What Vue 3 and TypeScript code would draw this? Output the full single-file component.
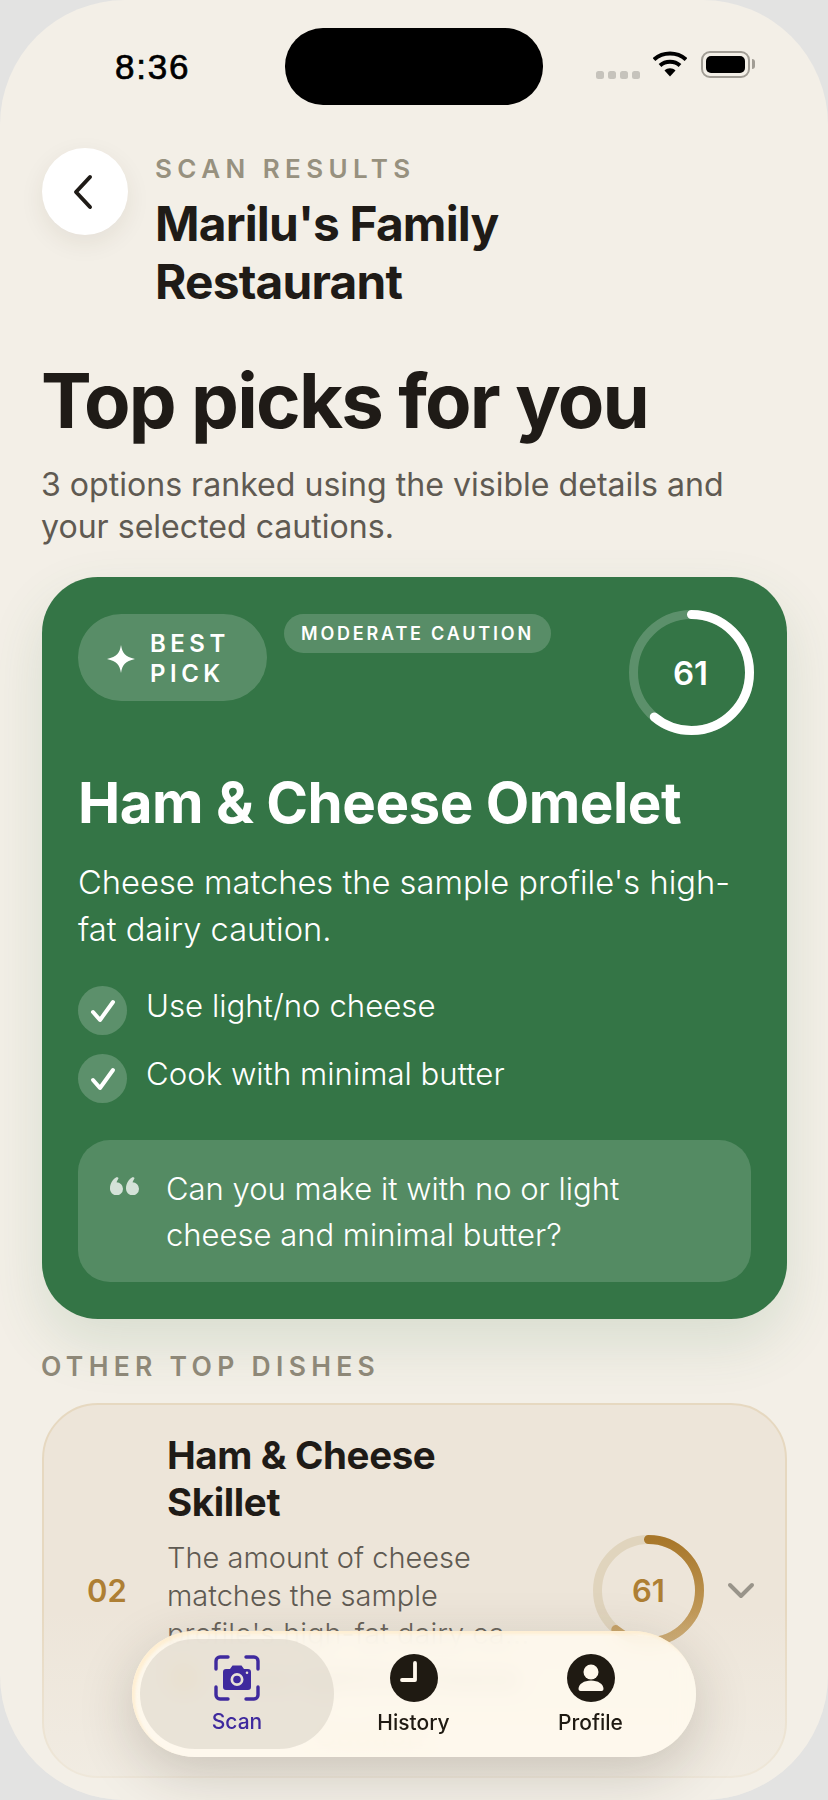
<script setup lang="ts">
const checks = ['Use light/no cheese', 'Cook with minimal butter']

function ringDash(size: number, stroke: number, score: number) {
  const c = 2 * Math.PI * ((size - stroke) / 2)
  return `${(c * score) / 100} ${c}`
}
</script>

<template>
  <div class="phone">
    <div class="status">
      <span class="time">8:36</span>
      <div class="island"></div>
      <div class="status-icons">
        <div class="dots"><i></i><i></i><i></i><i></i></div>
        <svg class="wifi" width="34" height="26" viewBox="0 0 34 26">
          <path d="M1 8.500C10 .5 24 .5 33 8.500" fill="none" stroke="#000" stroke-width="4" />
          <path d="M7 14.500C12.500 9.500 21.500 9.500 27 14.500" fill="none" stroke="#000" stroke-width="4" />
          <path d="M11.500 19.500C14.500 16.500 19.500 16.500 22.500 19.500L17 25.500Z" fill="#000" />
        </svg>
        <div class="battery"><span></span></div>
      </div>
    </div>

    <div class="content">
      <header class="top">
        <button class="back">
          <svg width="26" height="36" viewBox="0 0 26 36">
            <path d="M20 3 6 18l14 15" fill="none" stroke="#1f1b17" stroke-width="4" stroke-linecap="round" stroke-linejoin="round" />
          </svg>
        </button>
        <div>
          <div class="eyebrow">SCAN RESULTS</div>
          <h2 class="place">Marilu's Family<br />Restaurant</h2>
        </div>
      </header>

      <h1 class="headline">Top picks for you</h1>
      <p class="lead">3 options ranked using the visible details and your selected cautions.</p>

      <section class="best">
        <div class="best-top">
          <div class="pill-best">
            <svg width="28" height="28" viewBox="0 0 28 28">
              <path d="M14 0c1.500 8.500 4 11.500 14 14-10 2.500-12.500 5.500-14 14-1.500-8.500-4-11.500-14-14 10-2.500 12.500-5.500 14-14Z" fill="#fff" />
            </svg>
            <span>BEST<br />PICK</span>
          </div>
          <div class="pill-caution">MODERATE CAUTION</div>
          <div class="ring ring-lg">
            <svg width="125" height="125" viewBox="0 0 125 125">
              <circle cx="62.500" cy="62.500" r="58" fill="none" stroke="rgba(255,255,255,.2)" stroke-width="9" />
              <circle
                cx="62.500" cy="62.500" r="58" fill="none" stroke="#fff" stroke-width="9"
                stroke-linecap="round" transform="rotate(-90 62.500 62.500)"
                :stroke-dasharray="ringDash(125, 9, 61)"
              />
            </svg>
            <span>61</span>
          </div>
        </div>

        <h3 class="best-name">Ham &amp; Cheese Omelet</h3>
        <p class="best-desc">Cheese matches the sample profile's high-fat dairy caution.</p>

        <ul class="checks">
          <li v-for="c in checks" :key="c">
            <span class="tick">
              <svg width="26" height="24" viewBox="0 0 26 24">
                <path d="M3 13l7 8L23 3" fill="none" stroke="#fff" stroke-width="4" stroke-linecap="round" stroke-linejoin="round" />
              </svg>
            </span>
            <span class="check-text">{{ c }}</span>
          </li>
        </ul>

        <div class="quote">
          <svg class="quote-mark" width="31" height="18" viewBox="0 0 31 18">
            <path d="M7 0C3 2 0 6 0 11.500a6.500 6.500 0 1 0 6.500-6.200L8.600 1ZM23 0c-4 2-7 6-7 11.500a6.500 6.500 0 1 0 6.500-6.200L24.600 1Z" fill="rgba(255,255,255,.75)" />
          </svg>
          <p>Can you make it with no or light cheese and minimal butter?</p>
        </div>
      </section>

      <div class="section-label">OTHER TOP DISHES</div>

      <section class="dish">
        <div class="rank">02</div>
        <div class="dish-body">
          <h4>Ham &amp; Cheese Skillet</h4>
          <p>The amount of cheese matches the sample profile's high-fat dairy ca...</p>
          <div class="dish-check"><i></i>Use light/no cheese</div>
          <div class="dish-tag">Caution</div>
        </div>
        <div class="dish-side">
          <div class="ring ring-sm">
            <svg width="111" height="111" viewBox="0 0 111 111">
              <defs>
                <linearGradient id="gold" x1="1" y1="0" x2="0" y2="0">
                  <stop offset="0" stop-color="#a8772a" />
                  <stop offset="1" stop-color="#c9a56a" />
                </linearGradient>
              </defs>
              <circle cx="55.500" cy="55.500" r="51" fill="none" stroke="#e0d4bd" stroke-width="9" />
              <circle
                cx="55.500" cy="55.500" r="51" fill="none" stroke="url(#gold)" stroke-width="9"
                stroke-linecap="round" transform="rotate(-90 55.500 55.500)"
                :stroke-dasharray="ringDash(111, 9, 61)"
              />
            </svg>
            <span>61</span>
          </div>
          <svg width="28" height="18" viewBox="0 0 28 18">
            <path d="M3 3l11 11L25 3" fill="none" stroke="#99948a" stroke-width="4" stroke-linecap="round" stroke-linejoin="round" />
          </svg>
        </div>
      </section>
    </div>

    <div class="fade"></div>

    <nav class="tabbar">
      <div class="tab active">
        <svg width="46" height="46" viewBox="0 0 46 46">
          <path d="M2 14V6a4 4 0 0 1 4-4h8M32 2h8a4 4 0 0 1 4 4v8M2 32v8a4 4 0 0 0 4 4h8M44 32v8a4 4 0 0 1-4 4h-8" fill="none" stroke="#3f2a9e" stroke-width="3.400" stroke-linecap="round" />
          <path fill-rule="evenodd" d="M12 14h4l2.500-3.500h9L30 14h4a3 3 0 0 1 3 3v15a3 3 0 0 1-3 3H12a3 3 0 0 1-3-3V17a3 3 0 0 1 3-3Zm11 4a6.500 6.500 0 1 0 0 13 6.500 6.500 0 0 0 0-13Zm0 2.700a3.800 3.800 0 1 1 0 7.600 3.800 3.800 0 0 1 0-7.600ZM33 16.500a1.300 1.300 0 1 0 0 2.600 1.300 1.300 0 0 0 0-2.600Z" fill="#3f2a9e" />
        </svg>
        <span>Scan</span>
      </div>
      <div class="tab">
        <svg width="48" height="48" viewBox="0 0 48 48">
          <circle cx="24" cy="24" r="24" fill="#1f1a12" />
          <path d="M25 9v17H12" fill="none" stroke="#fff8ec" stroke-width="3.800" stroke-linecap="round" stroke-linejoin="round" />
        </svg>
        <span>History</span>
      </div>
      <div class="tab">
        <svg width="48" height="48" viewBox="0 0 48 48">
          <circle cx="24" cy="24" r="24" fill="#1f1a12" />
          <circle cx="24" cy="18" r="7.500" fill="#fff8ec" />
          <path d="M11.500 35c0-5 5.500-8.500 12.500-8.500s12.500 3.500 12.500 8.500a2 2 0 0 1-2 2h-21a2 2 0 0 1-2-2Z" fill="#fff8ec" />
        </svg>
        <span>Profile</span>
      </div>
    </nav>
  </div>
</template>

<style>
html,
body {
  margin: 0;
  background: #e3e3e2;
}
</style>

<style scoped>
* {
  box-sizing: border-box;
}

.phone {
  position: relative;
  width: 828px;
  height: 1800px;
  overflow: hidden;
  border-radius: 125px;
  background: #f3efe7;
  font-family: Inter, "Liberation Sans", sans-serif;
  color: #1f1b17;
}

.status {
  display: flex;
  align-items: center;
  height: 77px;
  margin-top: 28px;
  padding: 0 75px 0 115px;
}

.time {
  width: 170px;
  font-family: "Liberation Sans", sans-serif;
  font-size: 35px;
  letter-spacing: 1.800px;
  color: #000;
  -webkit-text-stroke: 0.7px #000;
  margin-top: 1px;
}

.island {
  width: 258px;
  height: 77px;
  border-radius: 38px;
  background: #000;
}

.status-icons {
  display: flex;
  align-items: center;
  gap: 13px;
  margin-left: auto;
  margin-top: -5px;
}

.dots {
  display: flex;
  gap: 4px;
  margin-top: 21px;
}

.dots i {
  width: 8px;
  height: 8px;
  border-radius: 2.500px;
  background: #c6c3bc;
}

.battery {
  position: relative;
  width: 49px;
  height: 27px;
  padding: 3px;
  border: 2px solid #a19d95;
  border-radius: 9px;
  margin-left: 1px;
  margin-right: 3px;
}

.battery span {
  display: block;
  height: 100%;
  border-radius: 5px;
  background: #000;
}

.battery::after {
  content: "";
  position: absolute;
  right: -7px;
  top: 6px;
  width: 3px;
  height: 10px;
  border-radius: 0 3px 3px 0;
  background: #a19d95;
}

.content {
  padding: 44px 41px 0 42px;
}

.top {
  display: flex;
  align-items: flex-start;
  gap: 27px;
}

.back {
  display: flex;
  align-items: center;
  justify-content: center;
  flex: none;
  width: 86px;
  height: 87px;
  margin-top: -1px;
  border: 0;
  border-radius: 50%;
  background: #fff;
  box-shadow: 0 8px 24px rgba(60, 45, 20, 0.08);
  padding: 0 4px 0 0;
}

.eyebrow {
  margin-top: 5px;
  font-size: 26px;
  line-height: 30px;
  font-weight: 600;
  letter-spacing: 5.400px;
  color: #97917f;
}

.place {
  margin: 11px 0 0;
  font-size: 47.800px;
  line-height: 58px;
  font-weight: 700;
  letter-spacing: -0.800px;
}

.headline {
  margin: 45px 0 0 -1px;
  font-size: 76px;
  line-height: 88px;
  font-weight: 700;
  letter-spacing: -1.800px;
}

.lead {
  margin: 20px 0 0 -1px;
  font-size: 32.100px;
  line-height: 42px;
  color: #5f5a52;
}

.best {
  margin-top: 29px;
  height: 742px;
  padding: 37px 36px 36px;
  border-radius: 56px;
  background: #347546;
  color: #fff;
  box-shadow: 0 24px 56px rgba(54, 118, 72, 0.14);
}

.best-top {
  display: flex;
  align-items: flex-start;
  gap: 17px;
}

.pill-best {
  display: flex;
  align-items: center;
  gap: 15px;
  width: 189px;
  height: 87px;
  padding-left: 29px;
  padding-top: 2px;
  border-radius: 44px;
  background: rgba(255, 255, 255, 0.18);
  font-size: 24px;
  line-height: 30px;
  font-weight: 600;
  letter-spacing: 4.500px;
}

.pill-caution {
  height: 39px;
  padding: 0 17px;
  border-radius: 20px;
  background: rgba(255, 255, 255, 0.18);
  font-size: 18px;
  line-height: 39px;
  font-weight: 600;
  letter-spacing: 2.800px;
}

.ring {
  position: relative;
  display: flex;
  align-items: center;
  justify-content: center;
  flex: none;
}

.ring svg {
  position: absolute;
  inset: 0;
}

.ring-lg {
  width: 125px;
  height: 125px;
  margin-left: auto;
  margin-top: -4px;
  margin-right: -3px;
  font-size: 33px;
  font-weight: 600;
  padding-right: 2px;
}

.best-name {
  margin: 36px 0 0;
  font-size: 56.500px;
  line-height: 64px;
  font-weight: 700;
  letter-spacing: -0.500px;
}

.best-desc {
  margin: 24px 0 0;
  font-size: 32.700px;
  line-height: 47px;
  font-weight: 300;
}

.checks {
  list-style: none;
  margin: 33px 0 0;
  padding: 0;
}

.checks li {
  display: flex;
  align-items: flex-start;
  gap: 19px;
  height: 49px;
  margin-bottom: 19px;
}

.tick {
  display: flex;
  align-items: center;
  justify-content: center;
  width: 49px;
  height: 49px;
  border-radius: 50%;
  background: rgba(255, 255, 255, 0.2);
}

.check-text {
  font-size: 31.200px;
  line-height: 40px;
  font-weight: 300;
}

.quote {
  display: flex;
  gap: 25px;
  height: 142px;
  margin-top: 37px;
  padding: 26px 32px;
  border-radius: 32px;
  background: rgba(255, 255, 255, 0.16);
}

.quote-mark {
  flex: none;
  margin-top: 11px;
}

.quote p {
  margin: 0;
  font-size: 31px;
  line-height: 46px;
  font-weight: 300;
}

.section-label {
  margin-top: 32px;
  margin-left: -1px;
  font-size: 26.500px;
  line-height: 30px;
  font-weight: 600;
  letter-spacing: 5.300px;
  color: #8e8878;
}

.dish {
  display: flex;
  align-items: center;
  height: 375px;
  margin-top: 22px;
  padding: 0 30px 0 43px;
  border: 2px solid #e6d8c0;
  border-radius: 56px;
  background: #ede5d9;
  overflow: hidden;
}

.rank {
  flex: none;
  width: 80px;
  font-size: 31px;
  font-weight: 600;
  color: #ae7f34;
}

.dish-body {
  align-self: flex-start;
  width: 370px;
  flex: none;
  margin-top: 27px;
}

.dish-body h4 {
  margin: 0;
  font-size: 38.500px;
  line-height: 47px;
  font-weight: 700;
  letter-spacing: -0.400px;
}

.dish-body p {
  margin: 13px 0 0;
  font-size: 29px;
  line-height: 38px;
  font-weight: 300;
  color: #5f5a52;
}

.dish-check {
  display: flex;
  align-items: center;
  gap: 38px;
  margin: 7px 0 0 3px;
  font-size: 30px;
  color: #5f5a52;
}

.dish-check i {
  width: 28px;
  height: 28px;
  border-radius: 50%;
  background: #f0a92a;
}

.dish-tag {
  margin: 21px 0 0 148px;
  font-size: 30px;
  color: #e0a040;
}

.dish-side {
  display: flex;
  align-items: center;
  gap: 23px;
  margin-left: auto;
}

.ring-sm {
  width: 111px;
  height: 111px;
  font-size: 31px;
  font-weight: 600;
  color: #ae7f34;
}

.fade {
  position: absolute;
  left: 0;
  right: 0;
  bottom: 0;
  height: 190px;
  background: linear-gradient(rgba(243, 239, 231, 0), rgba(243, 239, 231, 0.75));
  pointer-events: none;
}

.tabbar {
  position: absolute;
  left: 132px;
  top: 1631px;
  display: flex;
  width: 564px;
  height: 126px;
  padding: 8px;
  border-radius: 63px;
  background: rgba(255, 249, 238, 0.88);
  backdrop-filter: blur(10px);
  box-shadow: 0 16px 56px rgba(50, 40, 25, 0.2), inset 3px 3px 3px rgba(255, 235, 200, 0.7);
}

.tab {
  position: relative;
  display: flex;
  flex-direction: column;
  align-items: center;
  justify-content: flex-start;
  flex: none;
  width: 177px;
  padding-top: 15px;
  border-radius: 55px;
  font-size: 21px;
  font-weight: 500;
  color: #1f1a12;
}

.tab span {
  margin-top: 8px;
  line-height: 26px;
}

.tab.active {
  width: 194px;
  margin-right: -9px;
  padding-top: 16px;
  background: rgba(205, 198, 185, 0.42);
  color: #3f2a9e;
}
</style>
